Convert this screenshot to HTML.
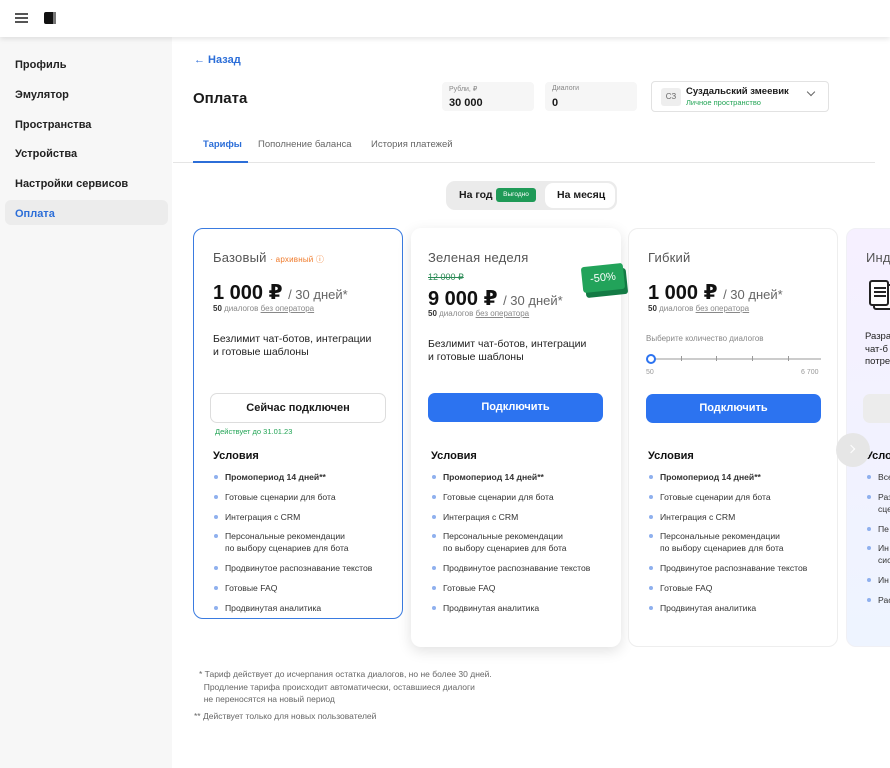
<!DOCTYPE html>
<html><head><meta charset="utf-8">
<style>
*{box-sizing:border-box;margin:0;padding:0}
body{width:890px;height:768px;overflow:hidden;position:relative;background:#fff;font-family:"Liberation Sans","DejaVu Sans",sans-serif;color:#1a1a1a}
.a{position:absolute;white-space:nowrap}
.side{left:0;top:37px;width:172px;height:731px;background:#f7f7f7}
.nav{left:15px;font-size:11px;font-weight:bold;color:#222}
.card{position:absolute;top:228px;width:210px;border-radius:10px;background:#fff}
.t{font-size:13px;color:#555;letter-spacing:.2px}
.price{font-size:20px;font-weight:bold;color:#111}
.price span{font-size:13px;font-weight:normal;color:#666}
.sub{font-size:8px;color:#888}
.sub b{color:#333}
.sub u{color:#888}
.desc{font-size:10.5px;line-height:13px;color:#222}
.btn{position:absolute;left:17px;width:175px;height:29px;border-radius:7px;background:#2c73f0;color:#fff;font-size:11px;font-weight:bold;text-align:center;line-height:29px}
.uc{font-size:11px;font-weight:bold;color:#111}
ul{list-style:none;position:absolute;left:20px;font-size:8.6px;color:#333}
li{position:relative;padding-left:11px;margin-bottom:7.8px;line-height:12px}
li:before{content:"";position:absolute;left:0;top:4px;width:4px;height:4px;border-radius:50%;background:#8fb0ee}
</style></head><body>
<div class="a" style="left:0;top:0;width:890px;height:37px;background:#fff;box-shadow:0 2px 5px rgba(0,0,0,.1);z-index:2">
  <div class="a" style="left:15px;top:13px;width:13px;height:2px;background:#555;box-shadow:0 4px 0 #555,0 8px 0 #555"></div>
  <div class="a" style="left:44px;top:12px;width:12px;height:12px;background:#111;border-radius:2px"></div>
  <div class="a" style="left:53px;top:12px;width:3px;height:12px;background:#777"></div>
</div>
<div class="a side"></div>
<div class="a nav" style="top:59px">Профиль</div>
<div class="a nav" style="top:89px">Эмулятор</div>
<div class="a nav" style="top:119px">Пространства</div>
<div class="a nav" style="top:148px">Устройства</div>
<div class="a nav" style="top:178px">Настройки сервисов</div>
<div class="a" style="left:5px;top:200px;width:163px;height:25px;border-radius:6px;background:#ececec"></div>
<div class="a nav" style="top:208px;color:#2c6ed8">Оплата</div>

<div class="a" style="left:194px;top:54px;font-size:11px;font-weight:bold;color:#2c6ed8">← Назад</div>
<div class="a" style="left:193px;top:90px;font-size:15px;font-weight:bold">Оплата</div>

<div class="a" style="left:442px;top:82px;width:92px;height:29px;background:#f6f6f6;border-radius:4px"></div>
<div class="a" style="left:449px;top:85px;font-size:7px;color:#888">Рубли, ₽</div>
<div class="a" style="left:449px;top:97px;font-size:11px;font-weight:bold">30 000</div>
<div class="a" style="left:545px;top:82px;width:92px;height:29px;background:#f6f6f6;border-radius:4px"></div>
<div class="a" style="left:552px;top:85px;font-size:7px;color:#888">Диалоги</div>
<div class="a" style="left:552px;top:97px;font-size:11px;font-weight:bold">0</div>
<div class="a" style="left:651px;top:81px;width:178px;height:31px;border:1px solid #e2e2e2;border-radius:4px;background:#fff"></div>
<div class="a" style="left:661px;top:88px;width:20px;height:18px;background:#eee;border-radius:3px;font-size:8px;color:#666;text-align:center;line-height:18px">СЗ</div>
<div class="a" style="left:686px;top:86px;font-size:9.5px;font-weight:bold">Суздальский змеевик</div>
<div class="a" style="left:686px;top:98px;font-size:7.5px;color:#22a455">Личное пространство</div>
<div class="a" style="left:808px;top:89px;width:6px;height:6px;border-right:1.3px solid #666;border-bottom:1.3px solid #666;transform:rotate(45deg)"></div>

<div class="a" style="left:203px;top:139px;font-size:9.5px;font-weight:bold;color:#2c6ed8">Тарифы</div>
<div class="a" style="left:258px;top:139px;font-size:9.5px;color:#666">Пополнение баланса</div>
<div class="a" style="left:371px;top:139px;font-size:9.5px;color:#666">История платежей</div>
<div class="a" style="left:173px;top:162px;width:702px;height:1px;background:#e5e5e5"></div>
<div class="a" style="left:193px;top:161px;width:55px;height:2px;background:#2c6ed8"></div>

<div class="a" style="left:446px;top:181px;width:171px;height:29px;background:#ebebeb;border-radius:9px"></div>
<div class="a" style="left:545px;top:183px;width:70px;height:25px;background:#fff;border-radius:8px"></div>
<div class="a" style="left:459px;top:189px;font-size:10.5px;font-weight:bold">На год</div>
<div class="a" style="left:496px;top:188px;width:40px;height:14px;background:#1f9a57;border-radius:3px;color:#fff;font-size:6.5px;text-align:center;line-height:14px">Выгодно</div>
<div class="a" style="left:557px;top:189px;font-size:10.5px;font-weight:bold">На месяц</div>

<!-- card 1 -->
<div class="card" style="left:193px;height:391px;border:1.5px solid #3a7be0">
  <div class="a t" style="left:19px;top:21px">Базовый <span style="font-size:8px;color:#f07a2a">· архивный ⓘ</span></div>
  <div class="a price" style="left:19px;top:51px">1 000 ₽ <span>/ 30 дней*</span></div>
  <div class="a sub" style="left:19px;top:75px"><b>50</b> диалогов <u>без оператора</u></div>
  <div class="a desc" style="left:19px;top:104px">Безлимит чат-ботов, интеграции<br>и готовые шаблоны</div>
  <div class="a" style="left:16px;top:164px;width:176px;height:30px;border:1px solid #ddd;border-radius:7px;text-align:center;line-height:28px;font-size:11px;font-weight:bold">Сейчас подключен</div>
  <div class="a" style="left:21px;top:198px;font-size:7.5px;color:#22a455">Действует до 31.01.23</div>
  <div class="a uc" style="left:19px;top:221px">Условия</div>
  <ul style="top:242px"><li><b>Промопериод 14 дней**</b></li><li>Готовые сценарии для бота</li><li>Интеграция с CRM</li><li>Персональные рекомендации<br>по выбору сценариев для бота</li><li>Продвинутое распознавание текстов</li><li>Готовые FAQ</li><li>Продвинутая аналитика</li></ul>
</div>
<!-- card 2 -->
<div class="card" style="left:411px;height:419px;box-shadow:0 4px 14px rgba(0,0,0,.12)">
  <div class="a t" style="left:17px;top:22px">Зеленая неделя</div>
  <div class="a" style="left:17px;top:44px;font-size:9px;color:#2a8a55;text-decoration:line-through">12 000 ₽</div>
  <div class="a price" style="left:17px;top:58px">9 000 ₽ <span>/ 30 дней*</span></div>
  <div class="a sub" style="left:17px;top:81px"><b>50</b> диалогов <u>без оператора</u></div>
  <div class="a desc" style="left:17px;top:110px">Безлимит чат-ботов, интеграции<br>и готовые шаблоны</div>
  <div class="btn" style="top:165px">Подключить</div>
  <div class="a uc" style="left:20px;top:222px">Условия</div>
  <ul style="top:243px;left:21px"><li><b>Промопериод 14 дней**</b></li><li>Готовые сценарии для бота</li><li>Интеграция с CRM</li><li>Персональные рекомендации<br>по выбору сценариев для бота</li><li>Продвинутое распознавание текстов</li><li>Готовые FAQ</li><li>Продвинутая аналитика</li></ul>
</div>
<div class="a" style="left:585px;top:270px;width:42px;height:26px;background:#137a44;border-radius:3px;transform:rotate(-6deg)"></div>
<div class="a" style="left:582px;top:265px;width:42px;height:26px;background:#22a35a;border-radius:3px;transform:rotate(-6deg);color:#fff;font-size:11px;text-align:center;line-height:26px">-50%</div>
<!-- card 3 -->
<div class="card" style="left:628px;height:419px;border:1px solid #eee">
  <div class="a t" style="left:19px;top:21px">Гибкий</div>
  <div class="a price" style="left:19px;top:51px">1 000 ₽ <span>/ 30 дней*</span></div>
  <div class="a sub" style="left:19px;top:75px"><b>50</b> диалогов <u>без оператора</u></div>
  <div class="a" style="left:17px;top:105px;font-size:8px;color:#888">Выберите количество диалогов</div>
  <div class="a" style="left:20px;top:129px;width:172px;height:2px;background:#ccc"></div>
  <div class="a" style="left:17px;top:125px;width:10px;height:10px;border:2.5px solid #2c73f0;border-radius:50%;background:#fff"></div>
  <div class="a" style="left:52px;top:127px;width:1px;height:5px;background:#999;box-shadow:35px 0 #999,71px 0 #999,107px 0 #999"></div>
  <div class="a" style="left:17px;top:140px;font-size:7px;color:#999">50</div>
  <div class="a" style="left:172px;top:140px;font-size:7px;color:#999">6 700</div>
  <div class="btn" style="top:165px">Подключить</div>
  <div class="a uc" style="left:19px;top:221px">Условия</div>
  <ul style="top:242px"><li><b>Промопериод 14 дней**</b></li><li>Готовые сценарии для бота</li><li>Интеграция с CRM</li><li>Персональные рекомендации<br>по выбору сценариев для бота</li><li>Продвинутое распознавание текстов</li><li>Готовые FAQ</li><li>Продвинутая аналитика</li></ul>
</div>
<!-- card 4 -->
<div class="card" style="left:846px;height:419px;width:60px;background:linear-gradient(180deg,#f6f0ff,#eef4ff);border:1px solid #f0f0f5;overflow:hidden">
  <div class="a t" style="left:19px;top:21px">Инд</div>
  <div class="a" style="left:26px;top:55px;width:20px;height:26px;border:2px solid #222;border-radius:3px;background:#fff"></div>
  <div class="a" style="left:22px;top:51px;width:20px;height:26px;border:2px solid #222;border-radius:3px;background:#fff"></div>
  <div class="a" style="left:27px;top:58px;width:12px;height:1.5px;background:#222;box-shadow:0 4px #222,0 8px #222"></div>
  <div class="a" style="left:18px;top:102px;font-size:9.5px;line-height:12.5px;color:#222">Разра<br>чат-б<br>потре</div>
  <div class="a" style="left:16px;top:165px;width:60px;height:29px;background:#ececec;border-radius:7px"></div>
  <div class="a uc" style="left:19px;top:221px">Усло</div>
  <ul style="top:242px;left:20px"><li>Все</li><li>Раз<br>сце</li><li>Пе</li><li>Ин<br>сис</li><li>Ин</li><li>Рас</li></ul>
</div>
<div class="a" style="left:836px;top:433px;width:34px;height:34px;border-radius:50%;background:#e6e6e6"></div>
<div class="a" style="left:848px;top:446px;width:6px;height:6px;border-right:1.2px solid #fff;border-top:1.2px solid #fff;transform:rotate(45deg)"></div>

<div class="a" style="left:199px;top:668px;font-size:8.5px;color:#666;line-height:12.5px">* Тариф действует до исчерпания остатка диалогов, но не более 30 дней.<br>&nbsp;&nbsp;Продление тарифа происходит автоматически, оставшиеся диалоги<br>&nbsp;&nbsp;не переносятся на новый период</div>
<div class="a" style="left:194px;top:711px;font-size:8.5px;color:#666">** Действует только для новых пользователей</div>
</body></html>
